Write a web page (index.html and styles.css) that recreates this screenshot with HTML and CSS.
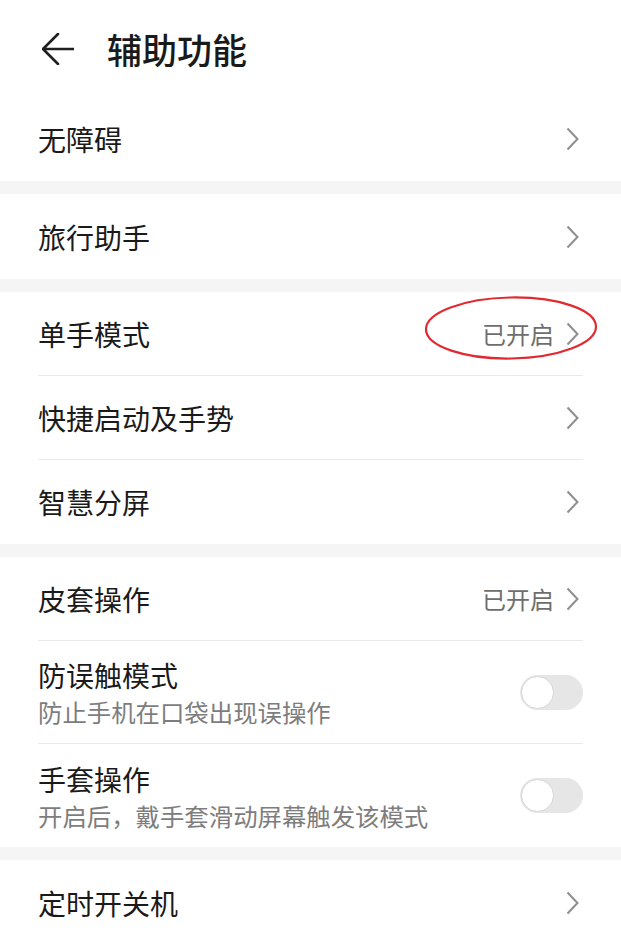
FILE: index.html
```html
<!DOCTYPE html>
<html lang="zh-CN">
<head>
    <meta charset="UTF-8">
    <title>辅助功能</title>
    <meta name="viewport" content="width=device-width, initial-scale=1.0">
    <link rel="stylesheet" href="styles.css">
</head>
<body>
    <!-- Header -->
    <header class="top-bar">
        <svg class="back-icon" width="32" height="32" viewBox="0 0 32 32">
            <path d="M16 1 L1 16 L16 31 M1 16 L32 16" fill="none" stroke="#1f1f1f" stroke-width="2.6" stroke-linecap="round" stroke-linejoin="round"/>
        </svg>
        <h1 class="page-title">辅助功能</h1>
    </header>

    <!-- Group 1 -->
    <section class="group">
        <div class="row">
            <span class="row-title">无障碍</span>
            <svg class="chevron" width="13" height="24" viewBox="0 0 13 24"><path d="M1.5 1.5 L11.5 12 L1.5 22.5" fill="none" stroke="#8e8e8e" stroke-width="2"/></svg>
        </div>
    </section>

    <!-- Group 2 -->
    <section class="group">
        <div class="row">
            <span class="row-title">旅行助手</span>
            <svg class="chevron" width="13" height="24" viewBox="0 0 13 24"><path d="M1.5 1.5 L11.5 12 L1.5 22.5" fill="none" stroke="#8e8e8e" stroke-width="2"/></svg>
        </div>
    </section>

    <!-- Group 3 -->
    <section class="group">
        <div class="row">
            <span class="row-title">单手模式</span>
            <span class="row-end">
                <span class="row-value">已开启</span>
                <svg class="chevron" width="13" height="24" viewBox="0 0 13 24"><path d="M1.5 1.5 L11.5 12 L1.5 22.5" fill="none" stroke="#8e8e8e" stroke-width="2"/></svg>
            </span>
            <svg class="mark" width="176" height="66" viewBox="0 0 176 66">
                <ellipse cx="88" cy="33" rx="85" ry="30.5" fill="none" stroke="#e12a30" stroke-width="2.2" transform="rotate(-1 88 33)"/>
            </svg>
        </div>
        <div class="row">
            <span class="row-title">快捷启动及手势</span>
            <svg class="chevron" width="13" height="24" viewBox="0 0 13 24"><path d="M1.5 1.5 L11.5 12 L1.5 22.5" fill="none" stroke="#8e8e8e" stroke-width="2"/></svg>
        </div>
        <div class="row">
            <span class="row-title">智慧分屏</span>
            <svg class="chevron" width="13" height="24" viewBox="0 0 13 24"><path d="M1.5 1.5 L11.5 12 L1.5 22.5" fill="none" stroke="#8e8e8e" stroke-width="2"/></svg>
        </div>
    </section>

    <!-- Group 4 -->
    <section class="group">
        <div class="row">
            <span class="row-title">皮套操作</span>
            <span class="row-end">
                <span class="row-value">已开启</span>
                <svg class="chevron" width="13" height="24" viewBox="0 0 13 24"><path d="M1.5 1.5 L11.5 12 L1.5 22.5" fill="none" stroke="#8e8e8e" stroke-width="2"/></svg>
            </span>
        </div>
        <div class="row tall">
            <div class="row-text">
                <span class="row-title">防误触模式</span>
                <span class="row-sub">防止手机在口袋出现误操作</span>
            </div>
            <span class="switch"><span class="knob"></span></span>
        </div>
        <div class="row tall">
            <div class="row-text">
                <span class="row-title">手套操作</span>
                <span class="row-sub">开启后，戴手套滑动屏幕触发该模式</span>
            </div>
            <span class="switch"><span class="knob"></span></span>
        </div>
    </section>

    <!-- Group 5 -->
    <section class="group">
        <div class="row">
            <span class="row-title">定时开关机</span>
            <svg class="chevron" width="13" height="24" viewBox="0 0 13 24"><path d="M1.5 1.5 L11.5 12 L1.5 22.5" fill="none" stroke="#8e8e8e" stroke-width="2"/></svg>
        </div>
    </section>
</body>
</html>
```

FILE: styles.css
```css
/* ====== Base ====== */
body {
    margin: 0;
    background: #ffffff;
    font-family: "Noto Sans CJK SC", "Noto Sans", sans-serif;
    color: #1a1a1a;
    overflow: hidden;
}

/* ====== Header ====== */
.top-bar {
    height: 96px;
    display: flex;
    align-items: center;
    padding-left: 42px;
    box-sizing: border-box;
}
.back-icon {
    display: block;
    margin-top: 1px;
}
.page-title {
    margin: 0 0 0 33px;
    font-size: 35px;
    font-weight: 500;
    line-height: 1;
    color: #1a1a1a;
}

/* ====== Groups ====== */
.group {
    background: #ffffff;
    border-bottom: 13px solid #f5f5f5;
}
.group:last-child {
    border-bottom: none;
}

/* ====== Rows ====== */
.row {
    position: relative;
    height: 85px;
    margin: 0 38px;
    display: flex;
    align-items: center;
    justify-content: space-between;
    border-bottom: 1px solid #e9e9e9;
    box-sizing: border-box;
}
.group:nth-of-type(3) .row,
.group:nth-of-type(4) .row {
    height: 84px;
}
.group:nth-of-type(4) .row.tall {
    height: 103px;
}
.row:last-child {
    border-bottom: none;
}
.row-title {
    font-size: 28px;
    line-height: 36px;
    color: #1a1a1a;
}
.row-text {
    display: flex;
    flex-direction: column;
    gap: 3px;
    margin-top: 1px;
}
.row-sub {
    font-size: 24.4px;
    line-height: 32px;
    color: #7d7d7d;
}
.row-end {
    display: flex;
    align-items: center;
    gap: 12px;
}
.row-value {
    font-size: 24px;
    color: #6e6e6e;
}

/* ====== Chevron ====== */
.chevron {
    display: block;
    margin-right: 4px;
    flex-shrink: 0;
}

/* ====== Switch ====== */
.switch {
    width: 63px;
    height: 35px;
    border-radius: 18px;
    background: #e6e6e6;
    display: flex;
    align-items: center;
    padding: 1px;
    box-sizing: border-box;
    margin-top: 0;
}
.knob {
    width: 33px;
    height: 33px;
    border-radius: 50%;
    background: #ffffff;
    border: 1.5px solid #d6d6d6;
    box-sizing: border-box;
}

/* ====== Red annotation ====== */
.mark {
    position: absolute;
    right: -16px;
    top: 3px;
    pointer-events: none;
}
```
